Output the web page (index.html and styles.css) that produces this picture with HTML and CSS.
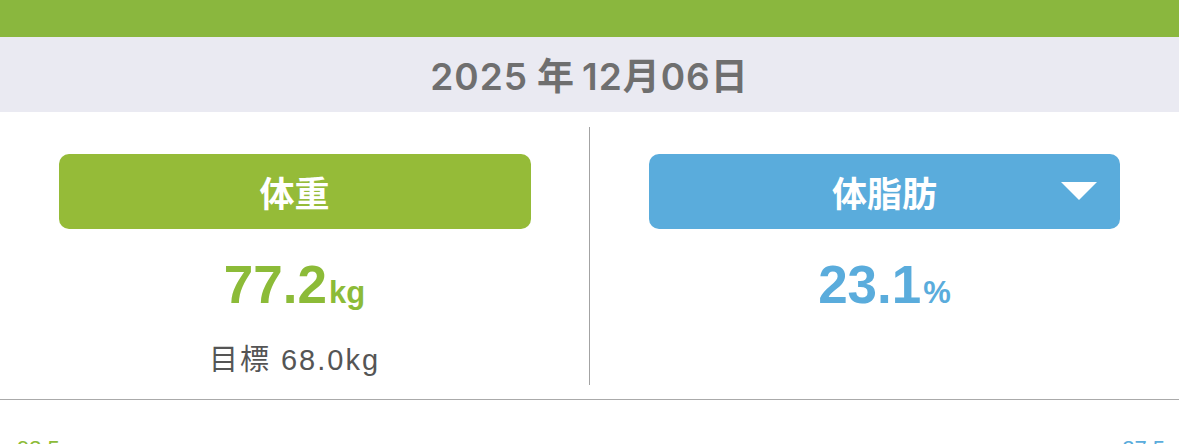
FILE: index.html
```html
<!DOCTYPE html>
<html lang="ja">
<head>
<meta charset="utf-8">
<link rel="stylesheet" href="styles.css">
</head>
<body>
  <div class="topbar"></div>
  <div class="datebar"><span class="date">2025<span class="gap">年</span>12月06日</span></div>
  <div class="panel">
    <div class="col">
      <div class="btn btn-green">体重</div>
      <div class="value green">77.2<span class="unit">kg</span></div>
      <div class="target">目標 68.0kg</div>
    </div>
    <div class="divider"></div>
    <div class="col">
      <div class="btn btn-blue">体脂肪<span class="caret"></span></div>
      <div class="value blue">23.1<span class="unit">%</span></div>
    </div>
  </div>
  <div class="axis">
    <span class="axis-label green">93.5</span>
    <span class="axis-label blue">27.5</span>
  </div>
</body>
</html>
```

FILE: styles.css
```css
html, body {
  margin: 0;
  padding: 0;
  background: #ffffff;
  overflow: hidden;
}
body {
  font-family: "Liberation Sans", "Noto Sans CJK JP", sans-serif;
  width: 1179px;
  height: 444px;
}
.topbar {
  height: 37px;
  background: #8ab73e;
}
.datebar {
  height: 75px;
  background: #eaeaf2;
  color: #6f6f6f;
  font-family: "Inter", "Noto Sans CJK JP", sans-serif;
  font-weight: 600;
  font-size: 37px;
  letter-spacing: 1px;
  display: flex;
  align-items: center;
  justify-content: center;
  padding-bottom: 2px;
  box-sizing: border-box;
}
.gap {
  margin: 0 7px 0 9px;
}
.panel {
  display: flex;
  padding: 15px 0 14px;
  border-bottom: 1px solid #aaaaaa;
  height: 258px;
}
.col {
  flex: 1;
  display: flex;
  flex-direction: column;
  align-items: center;
  padding-top: 27px;
}
.divider {
  width: 1px;
  background: #a3a3a3;
}
.btn {
  position: relative;
  width: 472px;
  height: 75px;
  border-radius: 10px;
  color: #ffffff;
  font-family: "Noto Sans CJK JP", sans-serif;
  font-weight: 700;
  font-size: 35px;
  display: flex;
  align-items: center;
  justify-content: center;
}
.btn-green { background: #95bb38; }
.btn-blue { background: #5aacdc; width: 471px; }
.caret {
  position: absolute;
  right: 23px;
  top: 28px;
  width: 0;
  height: 0;
  border-left: 18px solid transparent;
  border-right: 18px solid transparent;
  border-top: 18px solid #ffffff;
}
.value {
  margin-top: 26px;
  font-weight: 700;
  font-size: 53px;
  line-height: 60px;
}
.unit {
  font-size: 31px;
  margin-left: 2px;
}
.green { color: #8cbb38; }
.blue { color: #5aacdc; }
.target {
  margin-top: 20px;
  font-size: 29px;
  line-height: 34px;
  letter-spacing: 2px;
  color: #555555;
}
.axis {
  display: flex;
  justify-content: space-between;
  padding: 38px 14px 0 17px;
}
.axis-label {
  font-size: 22px;
  line-height: 22px;
}
```
